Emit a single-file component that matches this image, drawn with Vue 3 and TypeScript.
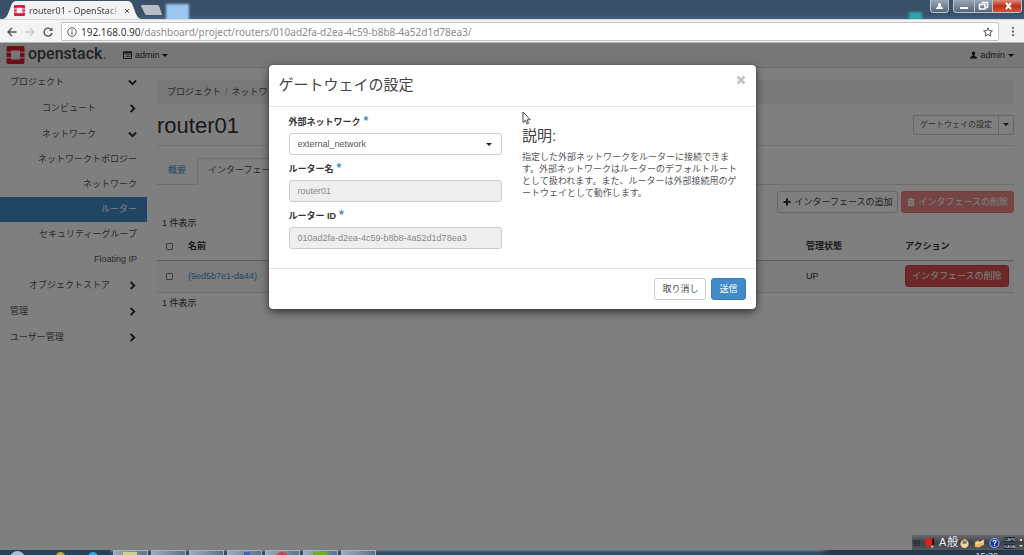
<script setup lang="ts">
import { ref } from 'vue'

interface MenuItem {
  label: string
  kind: 'group' | 'panel' | 'leaf' | 'store'
  open?: boolean
  active?: boolean
}

const menu: MenuItem[] = [
  { label: 'プロジェクト', kind: 'group', open: true },
  { label: 'コンピュート', kind: 'panel' },
  { label: 'ネットワーク', kind: 'panel', open: true },
  { label: 'ネットワークトポロジー', kind: 'leaf' },
  { label: 'ネットワーク', kind: 'leaf' },
  { label: 'ルーター', kind: 'leaf', active: true },
  { label: 'セキュリティーグループ', kind: 'leaf' },
  { label: 'Floating IP', kind: 'leaf' },
  { label: 'オブジェクトストア', kind: 'store' },
  { label: '管理', kind: 'group' },
  { label: 'ユーザー管理', kind: 'group' },
]

const tasks = ['folder', 'plain', 'plain', 'blue', 'red', 'green', 'plain']
const network = ref('external_network')
const routerName = ref('router01')
const routerId = ref('010ad2fa-d2ea-4c59-b8b8-4a52d1d78ea3')
</script>

<template>
  <div class="desktop">
    <header class="browser">
      <div class="titlebar">
        <div class="tab">
          <svg class="tab-shape" viewBox="0 0 140 19" preserveAspectRatio="none" aria-hidden="true">
            <path d="M0 19 C4 18 5 14 7 9 C9 3 10 1 14 1 H126 C130 1 131 3 133 9 C135 14 136 18 140 19Z" fill="#f3f3f3" />
          </svg>
          <svg class="favicon" viewBox="0 0 20 20" aria-hidden="true">
            <path fill="#da1a40" d="M2 0H18Q20 0 20 2V6.500H15V5H5V6.500H0V2Q0 0 2 0ZM0 8H5V12H0ZM15 8H20V12H15ZM0 13.500H5V15H15V13.500H20V18Q20 20 18 20H2Q0 20 0 18Z" />
          </svg>
          <span class="tab-title">router01 - OpenStack</span>
          <button class="tab-close" aria-label="タブを閉じる">
            <svg viewBox="0 0 6 6"><path d="M1 1L5 5M5 1L1 5" stroke="#555" stroke-width="1" /></svg>
          </button>
        </div>
        <svg class="new-tab" viewBox="0 0 22 10" aria-hidden="true"><path d="M1 0H16Q17.500 0 18 1L21 9Q21 10 20 10H6Q4.500 10 4 9L0 1Q0 0 1 0Z" fill="#b9bec4" /></svg>
        <i class="glass-spot"></i>
        <i class="glass-teal"></i>
        <div class="window-buttons">
          <button class="user" aria-label="ユーザー"><svg viewBox="0 0 17 12"><path d="M8.500 3a1.700 1.700 0 0 1 1 3L12 8V9H5V8L7.500 6A1.700 1.700 0 0 1 8.500 3Z" fill="#fff" /></svg></button>
          <div class="trio">
            <button aria-label="最小化"><svg viewBox="0 0 20 12"><path d="M6 7H14V9H6Z" fill="#fff" /></svg></button>
            <button aria-label="元に戻す"><svg viewBox="0 0 17 12"><path d="M6.500 2.500H12.500V7.500H10.500M4.500 4.500H10V9H4.500Z" fill="none" stroke="#fff" stroke-width="1.500" /></svg></button>
            <button class="close" aria-label="閉じる"><svg viewBox="0 0 31 12"><path d="M13 3L18 9M18 3L13 9" stroke="#fff" stroke-width="2" /></svg></button>
          </div>
        </div>
      </div>
      <div class="toolbar">
        <button class="nav-btn" aria-label="戻る"><svg viewBox="0 0 10 10"><path d="M9.500 5H1.500M5 1L1 5L5 9" /></svg></button>
        <button class="nav-btn dim" aria-label="進む"><svg viewBox="0 0 10 10"><path d="M.5 5H8.500M5 1L9 5L5 9" /></svg></button>
        <button class="nav-btn" aria-label="再読み込み"><svg viewBox="0 0 10 10"><path d="M8.500 3A4 4 0 1 0 9 6" /><path d="M9.500 .5V4H6Z" fill="#555" stroke="none" /></svg></button>
        <div class="address">
          <svg class="info" viewBox="0 0 10 10" aria-hidden="true"><circle cx="5" cy="5" r="4.300" fill="none" stroke="#555" /><path d="M5 4.300V7.500M5 2.300V3.400" stroke="#555" stroke-width="1.100" /></svg>
          <span class="url"><b>192.168.0.90</b>/dashboard/project/routers/010ad2fa-d2ea-4c59-b8b8-4a52d1d78ea3/</span>
          <svg class="star" viewBox="0 0 10 10" aria-hidden="true"><path d="M5 .8L6.200 3.700L9.400 3.900L7 6L7.700 9.100L5 7.400L2.300 9.100L3 6L.6 3.900L3.800 3.700Z" fill="none" stroke="#555" /></svg>
        </div>
        <button class="dots" aria-label="メニュー"><svg viewBox="0 0 4 10"><path d="M1 0H3V2H1ZM1 4H3V6H1ZM1 8H3V10H1Z" fill="#555" /></svg></button>
      </div>
    </header>

    <div class="page">
      <nav class="topnav">
        <a class="brand" href="#">
          <svg viewBox="0 0 20 20" aria-hidden="true">
            <path fill="#da1a32" d="M2 0H18Q20 0 20 2V6.500H15V5H5V6.500H0V2Q0 0 2 0ZM0 7.500H5V12.500H0ZM15 7.500H20V12.500H15ZM0 13.500H5V15H15V13.500H20V18Q20 20 18 20H2Q0 20 0 18Z" />
          </svg>
          <span>openstack<em>.</em></span>
        </a>
        <button class="nav-menu">
          <svg class="list" viewBox="0 0 9 8" aria-hidden="true"><path d="M.5 1H8.500V7.500H.5Z" fill="none" stroke="#333" /><path d="M0 .5H9V2.500H0ZM1.500 3.500H2.500V4.300H1.500ZM3.300 3.500H7.500V4.300H3.300ZM1.500 5.300H2.500V6.100H1.500ZM3.300 5.300H7.500V6.100H3.300Z" fill="#333" /></svg>
          admin <i class="caret"></i>
        </button>
        <button class="nav-menu account">
          <svg class="person" viewBox="0 0 8 8" aria-hidden="true"><path d="M4 0C5.400 0 6 1 5.900 2.300C5.800 3.300 5.300 4 5 4.300V5L7.300 6Q8 6.400 8 8H0Q0 6.400 .7 6L3 5V4.300C2.700 4 2.200 3.300 2.100 2.300C2 1 2.600 0 4 0Z" /></svg>
          admin <i class="caret"></i>
        </button>
      </nav>

      <div class="columns">
        <aside class="sidebar">
          <a v-for="(item, i) in menu" :key="i" href="#" :class="[item.kind, { active: item.active }]">
            <span>{{ item.label }}</span>
            <svg v-if="item.kind !== 'leaf'" class="chevron" :class="{ open: item.open }" viewBox="0 0 8 8" aria-hidden="true"><path d="M2.300 .8L5.500 4L2.300 7.200" /></svg>
          </a>
        </aside>

        <main class="content">
          <ol class="breadcrumb">
            <li>プロジェクト</li><li>ネットワーク</li>
          </ol>
          <div class="page-head">
            <h1>router01</h1>
            <div class="split">
              <button>ゲートウェイの設定</button>
              <button aria-label="その他の操作"><i class="caret"></i></button>
            </div>
          </div>
          <div class="tabs">
            <a href="#">概要</a>
            <a href="#" class="current">インターフェース</a>
          </div>
          <div class="actions">
            <button class="btn add"><svg viewBox="0 0 8 8" aria-hidden="true"><path d="M3 .5H5V3H7.500V5H5V7.500H3V5H.5V3H3Z" fill="#333" /></svg>インターフェースの追加</button>
            <button class="btn danger faded" disabled><svg viewBox="0 0 8 8" aria-hidden="true"><path d="M3 0H5V1H7.500V2H.5V1H3ZM1 2.500H7V7Q7 8 6 8H2Q1 8 1 7Z" fill="#fff" /><path d="M2.700 3.500V7M4 3.500V7M5.300 3.500V7" stroke="#e58987" stroke-width=".5" /></svg>インタフェースの削除</button>
          </div>
          <p class="count">1 件表示</p>
          <table>
            <thead>
              <tr>
                <th class="pick"><input type="checkbox" aria-label="すべて選択"></th>
                <th>名前</th>
                <th class="state">管理状態</th>
                <th class="act">アクション</th>
              </tr>
            </thead>
            <tbody>
              <tr>
                <td><input type="checkbox" aria-label="(9ed5b7e1-da44)"></td>
                <td><a href="#">(9ed5b7e1-da44)</a></td>
                <td>UP</td>
                <td><button class="btn danger">インタフェースの削除</button></td>
              </tr>
            </tbody>
          </table>
          <p class="count">1 件表示</p>
        </main>
      </div>

      <div class="backdrop">
        <form class="modal" role="dialog" aria-labelledby="modal-title" @submit.prevent>
          <div class="modal-head">
            <h2 id="modal-title">ゲートウェイの設定</h2>
            <button type="button" class="dismiss" aria-label="閉じる"><svg viewBox="0 0 10 10"><path d="M1.500 1.500L8.500 8.500M8.500 1.500L1.500 8.500" stroke="#c4c4c4" stroke-width="2.600" /></svg></button>
          </div>
          <div class="modal-body">
            <div class="fields">
              <div class="field">
                <label for="network">外部ネットワーク<span class="req">*</span></label>
                <div class="select">
                  <select id="network" v-model="network"><option>external_network</option></select>
                  <i class="caret"></i>
                </div>
              </div>
              <div class="field">
                <label for="name">ルーター名<span class="req">*</span></label>
                <input id="name" v-model="routerName" type="text" readonly>
              </div>
              <div class="field">
                <label for="rid">ルーター ID<span class="req">*</span></label>
                <input id="rid" v-model="routerId" type="text" readonly>
              </div>
            </div>
            <div class="help">
              <h3>説明:</h3>
              <p>指定した外部ネットワークをルーターに接続できま<br>す。外部ネットワークはルーターのデフォルトルート<br>として扱われます。また、ルーターは外部接続用のゲ<br>ートウェイとして動作します。</p>
              <svg class="pointer" viewBox="0 0 9 14" aria-hidden="true"><path d="M1 1V11.500L3.400 9.300L5 13L6.500 12.300L5 8.800H8.300Z" fill="#fff" stroke="#444" /></svg>
            </div>
          </div>
          <div class="modal-foot">
            <button type="button" class="btn">取り消し</button>
            <button class="btn primary">送信</button>
          </div>
        </form>
      </div>

      <div class="ime">
        <svg class="grip" viewBox="0 0 8 8" aria-hidden="true"><path d="M0 1H8M0 4H8M0 7H8" stroke="#17191c" stroke-width="1.500" stroke-dasharray="2 1" /></svg>
        <svg viewBox="0 0 12 12" aria-hidden="true"><circle cx="5" cy="5" r="4.500" fill="#d9201b" /><path d="M10 1V8" stroke="#300" stroke-width="2" /><circle cx="9" cy="10" r="1.300" fill="#e9bd70" /></svg>
        <span>A</span><span>般</span>
        <svg viewBox="0 0 12 12" aria-hidden="true"><circle cx="6" cy="7" r="4.500" fill="#e8d6a8" /><path d="M2 5L6 1L10 4L8 6Z" fill="#e6a43d" /><path d="M4 4H8V7H4Z" fill="#4d8794" /></svg>
        <svg viewBox="0 0 12 12" aria-hidden="true"><path d="M1 5L5 3L6 5L11 2V8L5 11L1 10Z" fill="#e7b869" /><path d="M2 7L10 4" stroke="#fff0bd" /></svg>
        <svg viewBox="0 0 12 12" aria-hidden="true"><circle cx="6" cy="6" r="5" fill="#1d36a9" stroke="#a8b6ef" /><path d="M4.300 4.700Q4.500 3 6 3Q7.800 3 7.700 4.500Q7.500 5.500 6 6.300V7.200M6 8V9.300" fill="none" stroke="#fff" stroke-width="1.200" /></svg>
        <div class="locks"><small>CAPS</small><small>KANA</small></div>
        <svg class="opts" viewBox="0 0 4 10" aria-hidden="true"><path d="M1 1H3V3H1ZM0 7H4L2 9Z" fill="#ddd" /></svg>
      </div>
    </div>

    <footer class="taskbar">
      <div class="launch"><i class="orb"></i><i class="orb gold"></i><i class="orb sky"></i></div>
      <div v-for="(t, i) in tasks" :key="i" class="task" :class="t"></div>
      <div class="tray"><time>15:39</time></div>
    </footer>
  </div>
</template>

<style>
html, body { margin: 0; background: #808080; }
</style>

<style scoped>
* { box-sizing: border-box; }
.desktop { display: flex; flex-direction: column; height: 100vh; overflow: hidden; font: 9px/13px "Liberation Sans", "Noto Sans CJK JP", sans-serif; color: #333; }
button, input, select { font: inherit; color: inherit; margin: 0; }
button { border: 0; padding: 0; background: none; }
svg { display: block; flex: none; }
a { color: inherit; text-decoration: none; }
p, h1, h2, h3, ol { margin: 0; padding: 0; font-weight: normal; }

.browser { flex: none; background: #f3f3f3; border-bottom: 1px solid #b4b4b4; }
.titlebar { position: relative; display: flex; height: 19px; padding-left: 3px; background: linear-gradient(#3a5068 0 14px, #41607c); overflow: hidden; }
.tab { position: relative; display: flex; align-items: center; width: 138px; height: 19px; padding: 0 11px; gap: 4px; font: 9px/16px "Noto Sans", sans-serif; color: #444; }
.tab-shape { position: absolute; inset: 0; width: 100%; height: 19px; }
.favicon { position: relative; width: 11px; height: 11px; margin-top: 2px; }
.tab-title { position: relative; flex: 1; margin-top: 2px; white-space: nowrap; overflow: hidden; mask-image: linear-gradient(90deg, #000 90%, transparent); }
.tab-close { position: relative; padding-left: 2px; }
.tab-close svg { width: 6px; height: 6px; margin-top: 2px; }
.new-tab { width: 22px; height: 10px; margin-top: 5px; }
.glass-spot { position: absolute; left: 166px; top: 4px; width: 23px; height: 18px; background: #9bc6ef; filter: blur(1px); }
.glass-teal { position: absolute; right: 102px; top: 12px; width: 13px; height: 9px; background: #2fa3ac; filter: blur(1px); }
.window-buttons { display: flex; gap: 4px; margin-left: auto; padding-right: 2px; }
.window-buttons svg { height: 12px; }
.user, .trio { height: 13px; border: 1px solid #b7c3cf; border-top: 0; border-radius: 0 0 4px 4px; background: linear-gradient(#9aa8b6, #53677a); overflow: hidden; }
.trio { display: flex; width: 69px; }
.trio button + button { border-left: 1px solid #b7c3cf; }
.trio .close { flex: 1; background: linear-gradient(#d98b7c, #bd3019 50%, #d5533a); }
.toolbar { display: flex; align-items: center; gap: 8px; height: 23px; padding: 1px 9px 0 7px; border-top: 1px solid #d8d8d8; }
.nav-btn svg { width: 10px; height: 10px; fill: none; stroke: #555; stroke-width: 1.4; }
.nav-btn.dim svg { stroke: #ccc; }
.address { display: flex; align-items: center; flex: 1; height: 19px; margin-right: 4px; padding: 0 5px; gap: 4px; background: #fff; border: 1px solid #c4c4c4; border-radius: 2px; }
.info, .star { width: 10px; height: 10px; }
.url { flex: 1; font: 10px/16px "Noto Sans", sans-serif; color: #8a8a8a; white-space: nowrap; }
.url b { font-weight: normal; color: #333; }
.dots svg { width: 4px; height: 9px; }

.page { position: relative; flex: 1; min-height: 0; background: #fff; }
.topnav { display: flex; align-items: center; height: 25px; padding: 0 10px 0 6px; background: #eee; border-bottom: 1px solid #ddd; }
.brand { display: flex; align-items: center; gap: 3px; font: 500 16px/20px Roboto, sans-serif; color: #444; }
.brand svg { width: 19px; height: 18px; }
.brand span { padding-bottom: 2px; }
.brand em { font-style: normal; color: #999; }
.nav-menu { display: flex; align-items: center; gap: 3px; margin-left: 16px; }
.account { margin-left: auto; }
.list { width: 9px; height: 8px; }
.person { width: 7px; height: 8px; fill: #222; }
.caret { display: block; width: 0; height: 0; border: 3px solid transparent; border-top-color: #222; border-bottom: 0; }

.columns { display: flex; }
.sidebar { flex: none; width: 147px; padding-top: 1px; color: #555; }
.sidebar a { display: flex; align-items: center; justify-content: space-between; height: 26px; padding: 0 10px; }
.sidebar .panel { padding-left: 42px; }
.sidebar .store { padding-left: 29px; }
.sidebar .leaf { height: 25px; justify-content: flex-end; }
.sidebar .active { background: #428bca; color: #fff; }
.chevron { width: 9px; height: 9px; fill: none; stroke: #333; stroke-width: 1.8; }
.chevron.open { transform: rotate(90deg); }

.content { flex: 1; min-width: 0; padding: 12px 10px; }
.breadcrumb { display: flex; height: 24px; align-items: center; padding: 0 10px; background: #f0f0f0; border-radius: 2px; list-style: none; color: #555; white-space: nowrap; }
.breadcrumb li + li::before { content: "/"; padding: 0 4px; color: #999; }
.page-head { display: flex; align-items: center; justify-content: space-between; height: 42px; padding-bottom: 1px; border-bottom: 1px solid #e4e4e4; }
h1 { font-size: 22px; line-height: 28px; padding-top: 4px; }
.split { display: flex; margin-top: 1px; border: 1px solid #ccc; border-radius: 2px; color: #555; font-size: 8px; }
.split button { height: 18px; padding: 0 6px; }
.split button + button { display: flex; align-items: center; padding: 0 4px; border-left: 1px solid #ccc; }
.tabs { display: flex; height: 27px; margin-top: 12px; border-bottom: 1px solid #ddd; }
.tabs a { padding: 6px 11px; height: 27px; color: #428bca; }
.tabs .current { color: #555; background: #fff; border: 1px solid #ddd; border-bottom: 0; border-radius: 3px 3px 0 0; padding: 5px 10px; }
.actions { display: flex; justify-content: flex-end; gap: 3px; margin-top: 6px; }
.btn { display: flex; align-items: center; gap: 3px; height: 22px; padding: 0 7px; border: 1px solid #ccc; border-radius: 3px; background: #fff; color: #444; white-space: nowrap; }
.btn svg { width: 8px; height: 8px; }
.add { padding: 0 5px; }
.danger { padding: 0 6px; background: #d9534f; border-color: #d43f3a; color: #fff; }
.faded { padding: 0 5px; background: #e98b89; border-color: #e57f7c; }
.count { height: 21px; padding: 4px 5px; }
table { width: 100%; table-layout: fixed; border-collapse: collapse; }
th, td { padding: 0 5px; text-align: left; vertical-align: middle; }
th { height: 26px; border-bottom: 1px solid #bbb; }
td { height: 32px; background: #f9f9f9; border-bottom: 1px solid #ddd; }
td a { color: #428bca; }
.pick { width: 26px; }
.state { width: 99px; }
.act { width: 114px; }
input[type="checkbox"] { display: block; appearance: none; width: 7px; height: 7px; margin-left: 4px; border: 1px solid #777; border-radius: 1px; background: #fff; }

.backdrop { position: absolute; inset: 0; padding: 22px 10px; background: rgba(0, 0, 0, .5); }
.modal { max-width: 487px; margin: 0 auto; background: #fff; border-radius: 4px; box-shadow: 0 3px 9px rgba(0, 0, 0, .6), 0 0 1px #222; color: #555; }
.modal-head { display: flex; justify-content: space-between; align-items: flex-start; height: 42px; padding: 10px; border-bottom: 1px solid #e5e5e5; }
h2 { font-size: 15px; line-height: 20px; color: #444; }
.dismiss svg { width: 10px; height: 10px; }
.modal-body { display: grid; grid-template-columns: minmax(0, 1fr) minmax(0, 1fr); gap: 20px; padding: 9px 20px 19px; }
.field { height: 39px; display: flex; flex-direction: column; gap: 4px; }
.field + .field { margin-top: 8px; }
.field label { display: flex; height: 13px; font-weight: bold; color: #333; }
.req { padding-left: 3px; color: #428bca; font-size: 12px; line-height: 10px; }
.field input, .select select { display: block; width: 100%; height: 22px; padding: 0 8px; border: 1px solid #ccc; border-radius: 3px; background: #fff; appearance: none; color: #555; }
.field input { background: #eee; color: #888; }
.select { position: relative; }
.select .caret { position: absolute; right: 10px; top: 10px; }
.help { position: relative; padding-top: 10px; white-space: nowrap; }
h3 { font-size: 15px; line-height: 20px; color: #444; }
.help p { padding-top: 5px; line-height: 12px; }
.pointer { position: absolute; left: 0; top: -5px; width: 9px; height: 14px; }
.modal-foot { display: flex; justify-content: flex-end; gap: 5px; padding: 9px 10px; border-top: 1px solid #e5e5e5; }
.primary { background: #428bca; border-color: #357ebd; color: #fff; }

.ime { position: absolute; right: 0; bottom: 0; display: flex; align-items: center; gap: 4px; width: 112px; height: 15px; padding: 0 2px; background: linear-gradient(#666a6f, #3e4247 50%, #555a60); color: #eee; font-size: 11px; overflow: hidden; }
.ime svg { width: 11px; height: 12px; }
.ime .grip { width: 6px; height: 8px; }
.ime span { margin-right: -3px; font-family: "Liberation Sans", "Noto Sans CJK JP", sans-serif; }
.locks { display: flex; flex-direction: column; gap: 2px; margin-left: auto; }
.locks small { font-size: 4px; line-height: 5px; background: #222c35; color: #cde; }
.ime .opts { width: 4px; height: 10px; }

.taskbar { position: relative; flex: none; display: flex; gap: 3px; height: 5px; background: linear-gradient(#5d7082 0 1px, #2f4d68 2px); overflow: hidden; }
.launch { position: relative; width: 110px; background: #26415a; }
.orb { position: absolute; left: 10px; top: 1px; width: 15px; height: 15px; border-radius: 50%; background: #a9bfd4; }
.orb.gold { left: 56px; top: 2px; width: 9px; height: 9px; background: #c9ab3d; }
.orb.sky { left: 88px; top: 2px; width: 10px; height: 10px; background: #3fa3da; }
.task { position: relative; width: 35px; border: 1px solid #a3b2c0; border-bottom: 0; background: linear-gradient(90deg, #9dabb8, #5e7388); }
.task::after { content: ""; position: absolute; left: 9px; top: 1px; width: 14px; height: 14px; border-radius: 50%; }
.folder::after { background: #d8cf8b; border-radius: 1px; }
.blue::after { background: #3f63b4; border-radius: 1px; width: 6px; left: 16px; }
.red::after { background: #c9453d; }
.green::after { background: #6fae23; border-radius: 3px; }
.tray { display: flex; justify-content: flex-end; align-items: flex-start; margin-left: auto; width: 205px; padding-right: 26px; background: linear-gradient(90deg, transparent, #26384c 12px); color: #dde; }
</style>
